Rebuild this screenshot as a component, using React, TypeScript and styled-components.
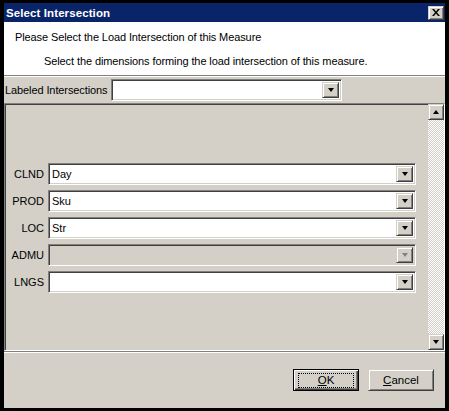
import React from 'react';
import styled, { createGlobalStyle, css } from 'styled-components';

const GlobalStyle = createGlobalStyle`
  html, body {
    margin: 0;
    padding: 0;
    background: #000;
  }
  body {
    font-family: 'Liberation Sans', Arial, sans-serif;
    font-size: 11px;
    color: #000;
  }
`;

const FACE = '#d4d0c8';
const SHADOW = '#808080';
const DARK = '#404040';

const raised = css`
  border: 1px solid;
  border-color: ${FACE} ${DARK} ${DARK} ${FACE};
  box-shadow: inset 1px 1px #fff, inset -1px -1px ${SHADOW};
`;

const sunken = css`
  border: 1px solid;
  border-color: ${SHADOW} #fff #fff ${SHADOW};
  box-shadow: inset 1px 1px ${DARK}, inset -1px -1px ${FACE};
`;

const Window = styled.div`
  width: 449px;
  height: 411px;
  box-sizing: border-box;
  padding: 3px 4px 3px 4px;
  background: #000;
  display: flex;
  flex-direction: column;
`;

const TitleBar = styled.div`
  height: 19px;
  flex-shrink: 0;
  background: #0a246a;
  color: #fff;
  display: flex;
  align-items: center;
  justify-content: space-between;
  padding: 0 1px 0 2px;
`;

const Title = styled.span`
  font-weight: bold;
  font-size: 11.5px;
  letter-spacing: 0.1px;
`;

const CloseButton = styled.div`
  ${raised};
  width: 16px;
  height: 14px;
  box-sizing: border-box;
  background: ${FACE};
  display: flex;
  align-items: center;
  justify-content: center;
  svg {
    display: block;
  }
`;

const Header = styled.div`
  height: 54px;
  flex-shrink: 0;
  background: #fff;
  box-sizing: border-box;
  padding: 9px 0 0 11px;
  display: flex;
  flex-direction: column;
  gap: 11px;
  border-bottom: 1px solid ${SHADOW};
  box-shadow: 0 1px 0 #fff;
  position: relative;
  z-index: 1;
  letter-spacing: -0.1px;
`;

const Heading = styled.div`
  line-height: 13px;
`;

const SubHeading = styled.div`
  line-height: 13px;
  padding-left: 29px;
`;

const Body = styled.div`
  flex: 1;
  background: ${FACE};
  display: flex;
  flex-direction: column;
  padding-top: 2px;
  border-top: 1px solid #fff;
`;

const LabeledRow = styled.div`
  display: flex;
  align-items: center;
  gap: 4px;
  padding-left: 1px;
  height: 21px;
  letter-spacing: -0.1px;
`;

const Panel = styled.div`
  ${sunken};
  margin-top: 3px;
  height: 248px;
  box-sizing: border-box;
  display: flex;
`;

const Fields = styled.div`
  flex: 1;
  display: grid;
  grid-template-columns: 39px 1fr;
  column-gap: 4px;
  row-gap: 5px;
  align-content: center;
  padding: 2px 12px 0 0;
`;

const FieldLabel = styled.label`
  text-align: right;
  align-self: center;
  color: #000;
`;

const Combo = styled.div<{ $disabled?: boolean; $width?: number }>`
  ${sunken};
  box-sizing: border-box;
  height: 22px;
  width: ${(p) => (p.$width ? `${p.$width}px` : 'auto')};
  background: ${(p) => (p.$disabled ? FACE : '#fff')};
  display: flex;
  align-items: stretch;
  padding: 2px;
`;

const ComboText = styled.span`
  flex: 1;
  padding-left: 1px;
  line-height: 16px;
  font-size: 11px;
`;

const ArrowButton = styled.div`
  ${raised};
  box-sizing: border-box;
  width: 17px;
  background: ${FACE};
  display: flex;
  align-items: center;
  justify-content: center;
`;

const Arrow = styled.span<{ $up?: boolean; $disabled?: boolean }>`
  width: 0;
  height: 0;
  border-left: 3.5px solid transparent;
  border-right: 3.5px solid transparent;
  ${(p) =>
    p.$up
      ? css`border-bottom: 4px solid ${p.$disabled ? SHADOW : '#000'};`
      : css`border-top: 4px solid ${p.$disabled ? SHADOW : '#000'};`}
`;

const ScrollBar = styled.div`
  width: 16px;
  display: flex;
  flex-direction: column;
  background-color: #fff;
  background-image: repeating-conic-gradient(${FACE} 0 25%, #fff 0 50%);
  background-size: 2px 2px;
`;

const ScrollButton = styled(ArrowButton)`
  width: 16px;
  height: 16px;
  flex-shrink: 0;
`;

const Track = styled.div`
  flex: 1;
`;

const Footer = styled.div`
  flex: 1;
  display: flex;
  justify-content: flex-end;
  align-items: flex-start;
  gap: 9px;
  padding: 16px 11px 0 0;
  border-top: 1px solid #fff;
  margin-top: 1px;
  box-shadow: 0 -1px 0 ${SHADOW};
`;

const Button = styled.button<{ $default?: boolean }>`
  width: 66px;
  height: 22px;
  box-sizing: border-box;
  background: ${FACE};
  font-family: inherit;
  font-size: 11.5px;
  color: #000;
  padding: 0;
  display: flex;
  align-items: center;
  justify-content: center;
  ${(p) =>
    p.$default
      ? css`
          border: 1px solid #000;
          box-shadow: inset 1px 1px #fff, inset -1px -1px ${DARK}, inset -2px -2px ${SHADOW};
        `
      : raised};
`;

const FocusRing = styled.span`
  border: 1px dotted #000;
  width: 54px;
  height: 13px;
  display: flex;
  align-items: center;
  justify-content: center;
  line-height: 13px;
`;

const Key = styled.span`
  text-decoration: underline;
`;

interface DimensionField {
  name: string;
  value: string;
  disabled?: boolean;
}

const dimensions: DimensionField[] = [
  { name: 'CLND', value: 'Day' },
  { name: 'PROD', value: 'Sku' },
  { name: 'LOC', value: 'Str' },
  { name: 'ADMU', value: '', disabled: true },
  { name: 'LNGS', value: '' },
];

function ComboBox({ value, disabled, width }: { value?: string; disabled?: boolean; width?: number }) {
  return (
    <Combo $disabled={disabled} $width={width}>
      <ComboText>{value}</ComboText>
      <ArrowButton>
        <Arrow $disabled={disabled} />
      </ArrowButton>
    </Combo>
  );
}

export default function App(): JSX.Element {
  return (
    <>
      <GlobalStyle />
      <Window>
        <TitleBar>
          <Title>Select Intersection</Title>
          <CloseButton>
            <svg width="8" height="7" viewBox="0 0 8 7">
              <path d="M0 0h2l2 2.5L6 0h2L5 3.5 8 7H6L4 4.5 2 7H0l3-3.5z" fill="#000" />
            </svg>
          </CloseButton>
        </TitleBar>
        <Header>
          <Heading>Please Select the Load Intersection of this Measure</Heading>
          <SubHeading>Select the dimensions forming the load intersection of this measure.</SubHeading>
        </Header>
        <Body>
          <LabeledRow>
            <span>Labeled Intersections</span>
            <ComboBox width={231} />
          </LabeledRow>
          <Panel>
            <Fields>
              {dimensions.map((d) => (
                <React.Fragment key={d.name}>
                  <FieldLabel>{d.name}</FieldLabel>
                  <ComboBox value={d.value} disabled={d.disabled} />
                </React.Fragment>
              ))}
            </Fields>
            <ScrollBar>
              <ScrollButton>
                <Arrow $up />
              </ScrollButton>
              <Track />
              <ScrollButton>
                <Arrow />
              </ScrollButton>
            </ScrollBar>
          </Panel>
          <Footer>
            <Button $default>
              <FocusRing>
                <Key>O</Key>K
              </FocusRing>
            </Button>
            <Button>
              <Key>C</Key>ancel
            </Button>
          </Footer>
        </Body>
      </Window>
    </>
  );
}
